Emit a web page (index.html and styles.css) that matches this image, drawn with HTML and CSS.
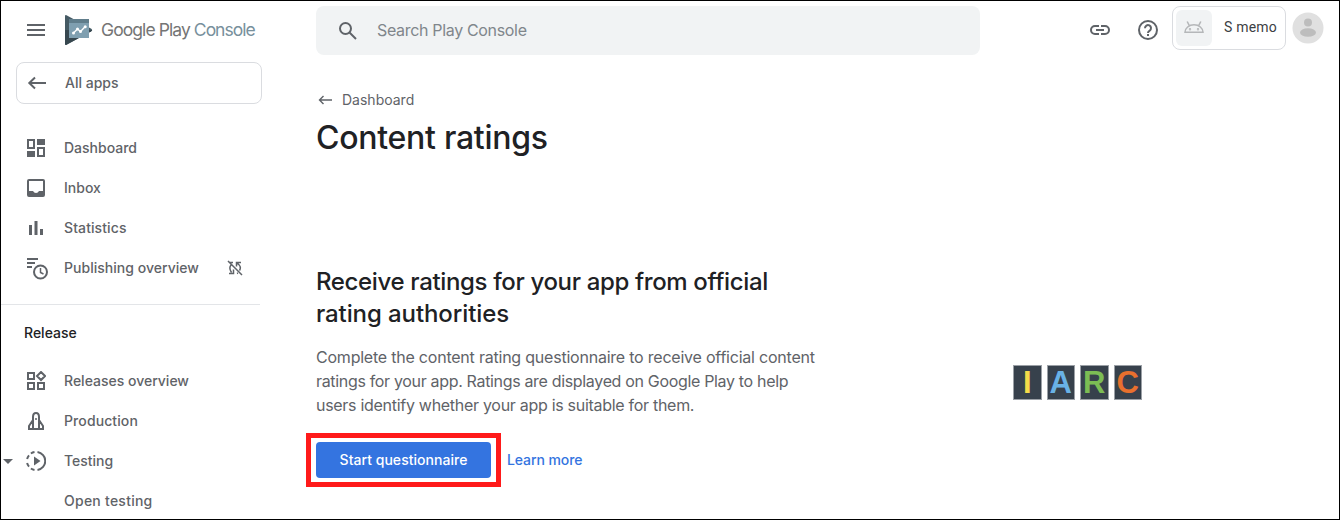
FILE: index.html
```html
<!DOCTYPE html>
<html lang="en">
<head>
<meta charset="utf-8">
<title>Content ratings</title>
<link rel="stylesheet" href="styles.css">
</head>
<body>
<div class="app">
  <aside class="sidebar">
    <div class="brand">
      <svg class="icon" viewBox="0 0 20 20"><path d="M1 4h18v2H1zM1 9h18v2H1zM1 14h18v2H1z"/></svg>
      <svg class="logo" viewBox="0 0 28 30">
        <path fill="#455a64" d="M0 1.2Q0-.4 1.500.3L26.300 13.700Q28 15 26.300 16.300L1.500 29.700Q0 30.400 0 28.800z"/>
        <path fill="#37474f" d="M0 15h27.100q0 .8-.8 1.300L1.500 29.700Q0 30.400 0 28.800z"/>
        <path fill="#7f9fb0" d="M4 4h20v19H4z"/><path fill="#607d8b" d="M4 4h20v4H4z"/>
        <path fill="none" stroke="#fff" stroke-width="1.300" d="m8.500 18 4-4 3 2.500 4.800-5"/>
        <g fill="#fff"><circle cx="8.500" cy="18" r="1.500"/><circle cx="12.500" cy="14" r="1.500"/><circle cx="15.500" cy="16.500" r="1.500"/><circle cx="20.200" cy="11.800" r="1.500"/></g>
      </svg>
      <div class="wordmark">Google Play <span class="wordmark-console">Console</span></div>
    </div>
    <a class="all-apps">
      <svg class="icon" viewBox="0 0 20 20"><path class="line" d="M19 10H2.500M8 4.500 2.300 10 8 15.500"/></svg>
      <span>All apps</span>
    </a>
    <nav class="nav">
      <a class="item"><svg class="icon" viewBox="0 0 20 20"><path fill-rule="evenodd" d="M1 1h8v10H1zm2 2v6h4V3zM11 1h8v6h-8zM1 13h8v6H1zM11 9h8v10h-8zm2 2v6h4v-6z"/></svg><span class="dash">Dashboard</span></a>
      <a class="item"><svg class="icon" viewBox="0 0 20 20"><path fill-rule="evenodd" d="M3 1h14q2 0 2 2v14q0 2-2 2H3q-2 0-2-2V3q0-2 2-2zm0 2v10h4q1 2 3 2t3-2h4V3z"/></svg><span>Inbox</span></a>
      <a class="item"><svg class="icon" viewBox="0 0 20 20"><path d="M3 7h3v10H3zM8.500 3h3v14h-3zM14 11h3v6h-3z"/></svg><span class="stats">Statistics</span></a>
      <a class="item"><svg class="icon publishing-icon" viewBox="0 0 22 22"><path d="M1 0h11v2H1zM1 4h8v2H1zM1 8h5v2H1z"/><circle class="line" cx="14.500" cy="14" r="6.500"/><path class="line thin" d="M14.500 10v4.500l3 1.500"/></svg><span class="publishing">Publishing overview</span>
        <svg class="sync-off" viewBox="0 0 16 16"><path class="line thin" d="m1 1 14 14M6 2.500H2M4 5Q1.500 8 4.500 12.500M2 13.500h4.500V9.500M14 2.500H9.500v4M10 3q5 3.500 2.500 7.500M10 13.500l1-.5"/></svg></a>
    </nav>
    <div class="divider"></div>
    <h2 class="section">Release</h2>
    <nav class="nav">
      <a class="item"><svg class="icon" viewBox="0 0 20 20"><path class="line" d="M2 2h6v6H2zM2 12h6v6H2zM12 12h6v6h-6zM15 1l4 4-4 4-4-4z"/></svg><span class="releases">Releases overview</span></a>
      <a class="item"><svg class="icon" viewBox="0 0 20 20"><path class="line" d="M7 18V6q0-4 3-4t3 4v12zM7 9l-4 6v3h4M13 9l4 6v3h-4"/><circle cx="10" cy="8" r="1"/></svg><span class="production">Production</span></a>
      <a class="item testing"><svg class="caret" viewBox="0 0 10 5"><path d="M0 0h10L5 5z"/></svg><svg class="icon" viewBox="0 0 20 20"><path class="line" d="M11.500 1a9.100 9.100 0 0 1 0 18"/><path class="line" d="M8.500 1a9 9 0 0 0-3.600 1.500M3 4.400A9 9 0 0 0 1.100 8M1.100 12A9 9 0 0 0 3 15.600M4.900 17.500A9 9 0 0 0 8.500 19"/><path d="m8 5.500 6.500 4.500L8 14.500z"/></svg><span>Testing</span></a>
      <a class="item sub"><span>Open testing</span></a>
    </nav>
  </aside>

  <div class="page">
    <header class="topbar">
      <div class="search">
        <svg class="search-icon" viewBox="0 0 20 20"><circle class="line" cx="7.500" cy="7.500" r="5.500"/><path class="line" d="m11.500 11.500 6.500 6.500"/></svg>
        <span>Search Play Console</span>
      </div>
      <div class="actions">
        <svg class="link-icon" viewBox="0 0 20 10"><path class="line" d="M9 1H5a4 4 0 0 0 0 8h4M11 1h4a4 4 0 0 1 0 8h-4M6 5h8"/></svg>
        <svg class="help-icon" viewBox="0 0 20 20"><circle class="line" cx="10" cy="10" r="9"/><path class="line" d="M7 8.200a3 3 0 1 1 4.700 2.400Q10 11.600 10 13"/><path d="M9 14h2v2H9z"/></svg>
        <div class="app-chip">
          <span class="app-thumb"><svg class="android" viewBox="0 0 20 12"><path d="M1 11.300a9 7.500 0 0 1 18 0zM5.500 5l-2.300-4.500M14.500 5l2.300-4.500"/><circle cx="6" cy="8.300" r=".4"/><circle cx="14" cy="8.300" r=".4"/></svg></span>
          <span class="app-name">S memo</span>
        </div>
        <svg class="avatar" viewBox="0 0 32 32"><circle cx="16" cy="16" r="15.500" fill="#e0e0e0"/><circle cx="16" cy="10.500" r="4" fill="#bdbdbd"/><ellipse cx="16" cy="20.500" rx="8" ry="4.300" fill="#bdbdbd"/></svg>
      </div>
    </header>
    <main class="content">
      <a class="crumb"><svg class="crumb-icon" viewBox="0 0 14 10"><path class="line" d="M14 5H1.500M5.500 1l-4 4 4 4"/></svg><span>Dashboard</span></a>
      <h1 class="title">Content ratings</h1>
      <section class="intro">
        <div class="copy">
          <h2 class="headline"><span class="h-one">Receive ratings for your app from official</span><br><span class="h-two">rating authorities</span></h2>
          <p class="text"><span class="p-one">Complete the content rating questionnaire to receive official content</span><br><span class="p-two">ratings for your app. Ratings are displayed on Google Play to help</span><br><span class="p-three">users identify whether your app is suitable for them.</span></p>
          <div class="buttons">
            <div class="highlight"><button class="primary">Start questionnaire</button></div>
            <a class="learn">Learn more</a>
          </div>
        </div>
        <div class="iarc"><span class="tile yellow">I</span><span class="tile blue">A</span><span class="tile green">R</span><span class="tile orange">C</span></div>
      </section>
    </main>
  </div>
</div>
</body>
</html>
```
FILE: styles.css
```css
* { box-sizing: border-box; }
body { margin: 0; background: #fff; color: #5f6368; font: 500 14px/20px Inter, "Open Sans", sans-serif; }
h1, h2, p { margin: 0; font-weight: 500; }
svg { display: block; flex: none; fill: #5f6368; }
.line { fill: none; stroke: #5f6368; stroke-width: 2; }
.thin { stroke-width: 1.5; }
.app { display: flex; width: 1340px; height: 520px; overflow: hidden; border: 1px solid #000; }
.sidebar { width: 261px; flex: none; }
.icon { width: 20px; height: 20px; }
.brand { display: flex; align-items: center; height: 61px; padding: 0 0 3px 25px; }
.logo { width: 28px; height: 30px; margin-left: 19px; }
.wordmark { margin-left: 8px; font-size: 17.5px; font-weight: 400; color: #757575; letter-spacing: -.92px; white-space: nowrap; }
.wordmark-console { color: #78909c; letter-spacing: -1px; }
.all-apps { display: flex; align-items: center; gap: 18px; width: 246px; height: 42px; margin-left: 15px; padding-left: 10px; border: 1px solid #dadce0; border-radius: 8px; }
.nav { display: flex; flex-direction: column; }
.all-apps + .nav { margin-top: 24px; }
.item { display: flex; align-items: center; gap: 18px; height: 40px; padding-left: 25px; white-space: nowrap; }
.stats, .production { letter-spacing: .1px; }
.publishing-icon { width: 22px; height: 22px; margin: 2px -2px 0 0; }
.publishing { letter-spacing: .03px; width: 135px; }
.sync-off { width: 16px; height: 16px; margin-left: 10px; }
.divider { width: 259px; height: 1px; margin-top: 16px; background: #e3e5e8; }
.section { margin: 18px 0 18px 23px; font-size: 14px; line-height: 20px; color: #202124; }
.section + .nav { margin-top: 18px; }
.testing { padding-left: 2px; gap: 13px; }
.testing span { margin-left: 5px; }
.caret { width: 10px; height: 5px; }
.sub { padding-left: 63px; letter-spacing: .25px; }
.page { flex: 1; padding-left: 54px; }
.topbar { display: flex; justify-content: space-between; padding: 5px 15px 0 0; }
.search { display: flex; align-items: center; gap: 19px; width: 664px; height: 49px; padding-left: 22px; border-radius: 8px; background: #f1f3f4; color: #80868b; font-size: 16px; font-weight: 400; letter-spacing: -.33px; }
.search span { padding-bottom: 2px; }
.search-icon { width: 20px; height: 20px; }
.actions { display: flex; align-items: center; height: 44px; }
.link-icon { width: 20px; height: 10px; margin: 4px 28px 0 0; }
.help-icon { width: 20px; height: 20px; margin: 4px 14px 0 0; }
.app-chip { display: flex; align-items: center; gap: 12px; width: 114px; height: 44px; padding-left: 3px; border: 1px solid #dadce0; border-radius: 8px; margin-right: 6px; color: #3c4043; }
.app-thumb { display: flex; align-items: center; justify-content: center; width: 36px; height: 36px; border-radius: 6px; background: #f1f3f4; }
.android { width: 20px; height: 12px; margin-bottom: 2px; fill: none; stroke: #b5b7b9; stroke-width: 1.6; }
.app-name { padding-bottom: 2px; font-family: Roboto, sans-serif; font-weight: 400; white-space: nowrap; letter-spacing: .2px; }
.avatar { width: 32px; height: 32px; }
.content { padding-top: 35px; }
.crumb { display: flex; align-items: center; gap: 10px; padding-left: 2px; font-weight: 400; }
.crumb-icon { width: 14px; height: 10px; }
.crumb .line { stroke-width: 1.4; }
.title { margin-top: 8px; font-size: 32px; line-height: 40px; color: #202124; letter-spacing: -.27px; }
.intro { display: flex; }
.copy { width: 697px; padding-top: 108px; }
.headline { font-size: 24px; line-height: 32px; color: #202124; white-space: nowrap; }
.h-one { letter-spacing: -.35px; }
.h-two { letter-spacing: -.1px; }
.text { margin-top: 15px; font-size: 16px; font-weight: 400; line-height: 24px; white-space: nowrap; }
.p-one { letter-spacing: -.22px; }
.p-two { letter-spacing: -.33px; }
.p-three { letter-spacing: -.29px; }
.buttons { display: flex; align-items: center; gap: 6px; margin: 16px 0 0 -10px; }
.highlight { width: 195px; height: 54px; padding: 4px 5px; border: 5px solid #ff1a1a; }
.primary { display: block; width: 175px; height: 36px; padding: 0; border: 0; border-radius: 4px; background: #3474e0; color: #fff; font: inherit; letter-spacing: .03px; }
.learn { color: #3474e0; letter-spacing: -.08px; }
.iarc { display: flex; gap: 5px; margin-top: 207px; height: 35px; }
.tile { display: flex; align-items: center; justify-content: center; width: 28.5px; height: 35px; background: #37414c; border: 1px solid #9ba0a6; font: 700 31px/35px "Liberation Sans", Arial, sans-serif; }
.yellow { color: #f5dc4a; }
.blue { color: #69b2e6; }
.green { color: #7cbd54; }
.orange { color: #e8702e; }
```
